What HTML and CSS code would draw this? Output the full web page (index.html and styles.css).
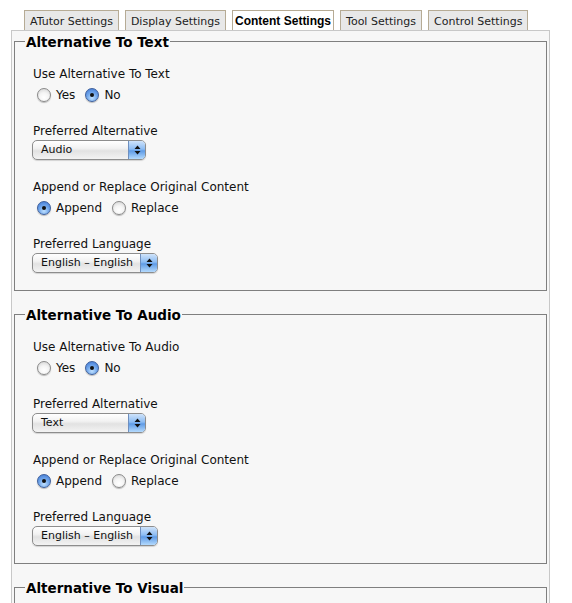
FILE: index.html
```html
<!DOCTYPE html>
<html>
<head>
<meta charset="utf-8">
<link rel="stylesheet" href="styles.css">
</head>
<body>
<div class="page">
  <ul class="tabs">
    <li class="tab">ATutor Settings</li>
    <li class="tab">Display Settings</li>
    <li class="tab active">Content Settings</li>
    <li class="tab">Tool Settings</li>
    <li class="tab">Control Settings</li>
  </ul>
  <div class="panel">
    <fieldset class="section">
      <legend>Alternative To Text</legend>
      <div class="group radio-group">
        <div class="label">Use Alternative To Text</div>
        <div class="radios">
          <span class="opt"><span class="radio"></span>Yes</span>
          <span class="opt"><span class="radio checked"></span>No</span>
        </div>
      </div>
      <div class="group select-group">
        <div class="label">Preferred Alternative</div>
        <div class="select short"><span class="val">Audio</span><span class="arrows"><svg width="7" height="10" viewBox="0 0 7 10"><path d="M3.5 0.5 L6.5 4 L0.5 4 Z M0.5 6 L6.5 6 L3.5 9.5 Z" fill="#111"/></svg></span></div>
      </div>
      <div class="group radio-group">
        <div class="label">Append or Replace Original Content</div>
        <div class="radios">
          <span class="opt"><span class="radio checked"></span>Append</span>
          <span class="opt"><span class="radio"></span>Replace</span>
        </div>
      </div>
      <div class="group select-group">
        <div class="label">Preferred Language</div>
        <div class="select long"><span class="val">English – English</span><span class="arrows"><svg width="7" height="10" viewBox="0 0 7 10"><path d="M3.5 0.5 L6.5 4 L0.5 4 Z M0.5 6 L6.5 6 L3.5 9.5 Z" fill="#111"/></svg></span></div>
      </div>
    </fieldset>

    <fieldset class="section">
      <legend>Alternative To Audio</legend>
      <div class="group radio-group">
        <div class="label">Use Alternative To Audio</div>
        <div class="radios">
          <span class="opt"><span class="radio"></span>Yes</span>
          <span class="opt"><span class="radio checked"></span>No</span>
        </div>
      </div>
      <div class="group select-group">
        <div class="label">Preferred Alternative</div>
        <div class="select short"><span class="val">Text</span><span class="arrows"><svg width="7" height="10" viewBox="0 0 7 10"><path d="M3.5 0.5 L6.5 4 L0.5 4 Z M0.5 6 L6.5 6 L3.5 9.5 Z" fill="#111"/></svg></span></div>
      </div>
      <div class="group radio-group">
        <div class="label">Append or Replace Original Content</div>
        <div class="radios">
          <span class="opt"><span class="radio checked"></span>Append</span>
          <span class="opt"><span class="radio"></span>Replace</span>
        </div>
      </div>
      <div class="group select-group">
        <div class="label">Preferred Language</div>
        <div class="select long"><span class="val">English – English</span><span class="arrows"><svg width="7" height="10" viewBox="0 0 7 10"><path d="M3.5 0.5 L6.5 4 L0.5 4 Z M0.5 6 L6.5 6 L3.5 9.5 Z" fill="#111"/></svg></span></div>
      </div>
    </fieldset>

    <fieldset class="section">
      <legend>Alternative To Visual</legend>
      <div class="group radio-group">
        <div class="label">Use Alternative To Visual</div>
        <div class="radios">
          <span class="opt"><span class="radio"></span>Yes</span>
          <span class="opt"><span class="radio checked"></span>No</span>
        </div>
      </div>
    </fieldset>
  </div>
</div>
</body>
</html>
```

FILE: styles.css
```css
html, body {
  margin: 0;
  padding: 0;
  background: #fff;
}
body {
  font-family: "DejaVu Sans", Verdana, sans-serif;
  font-size: 12px;
  color: #111;
}
.page {
  padding-top: 10px;
}
.tabs {
  list-style: none;
  margin: 0;
  padding: 0 0 0 24px;
  display: flex;
  gap: 6px;
}
.tab {
  height: 19px;
  line-height: 22px;
  padding: 0 5px;
  border: 1px solid #b6ab95;
  border-bottom: none;
  background: #e8e8e8;
  font-size: 11px;
  color: #222;
}
.tab.active {
  background: #fff;
  font-family: "Liberation Sans", Arial, sans-serif;
  font-weight: bold;
  font-size: 12px;
  color: #000;
  line-height: 20px;
  padding: 0 2px;
}
.panel {
  margin-left: 11px;
  width: 537px;
  height: 700px;
  border: 1px solid #c8c8c8;
  background: #f7f7f7;
  padding-top: 1px;
}
.section {
  margin: 0 2px 14px 2px;
  padding: 0 0 0 10px;
  border: 1px solid #7f7f7f;
}
.section legend {
  padding: 2px 1px 0 1px;
  font-weight: bold;
  font-size: 13.5px;
  color: #000;
  line-height: 17px;
}
.group {
  padding-left: 8px;
  margin-bottom: 18px;
}
.group:first-of-type {
  margin-top: 15px;
}
.select-group {
  margin-bottom: 19px;
}
.group:last-child {
  margin-bottom: 17px;
}
.label {
  line-height: 16px;
  height: 16px;
}
.radios {
  margin-top: 3px;
  height: 20px;
  display: flex;
  align-items: center;
  padding-left: 4px;
}
.opt {
  display: inline-flex;
  align-items: center;
  margin-right: 10px;
}
.radio {
  width: 12px;
  height: 12px;
  border-radius: 50%;
  border: 1px solid #8a8a8a;
  background: radial-gradient(circle at 50% 70%, #ffffff 0%, #f4f4f4 45%, #cfcfcf 100%);
  box-shadow: 0 1px 1px rgba(0,0,0,0.25);
  margin-right: 5px;
  position: relative;
  box-sizing: content-box;
}
.radio.checked {
  border-color: #3d5f9c;
  background: radial-gradient(circle at 50% 75%, #bfe0ff 0%, #74a9ec 45%, #3b74d2 100%);
}
.radio.checked::after {
  content: "";
  position: absolute;
  left: 4px;
  top: 4px;
  width: 4px;
  height: 4px;
  border-radius: 50%;
  background: #111;
}
.select {
  margin-top: 1px;
  height: 18px;
  border: 1px solid #8d8d8d;
  border-radius: 5px;
  display: flex;
  align-items: stretch;
  overflow: hidden;
  background: linear-gradient(#ffffff 0%, #f2f2f2 40%, #e2e2e2 55%, #f3f3f3 100%);
  box-shadow: 0 1px 1px rgba(0,0,0,0.15);
  margin-left: -1px;
  font-size: 11px;
}
.select.short { width: 112px; }
.select.long { width: 124px; }
.val {
  flex: 1;
  padding-left: 8px;
  line-height: 18px;
}
.arrows {
  width: 16px;
  border-left: 1px solid #6e8fbf;
  background: linear-gradient(#cfe3fa 0%, #8cbcf3 45%, #5f9be6 55%, #b4dafd 100%);
  display: flex;
  align-items: center;
  justify-content: center;
}
```
